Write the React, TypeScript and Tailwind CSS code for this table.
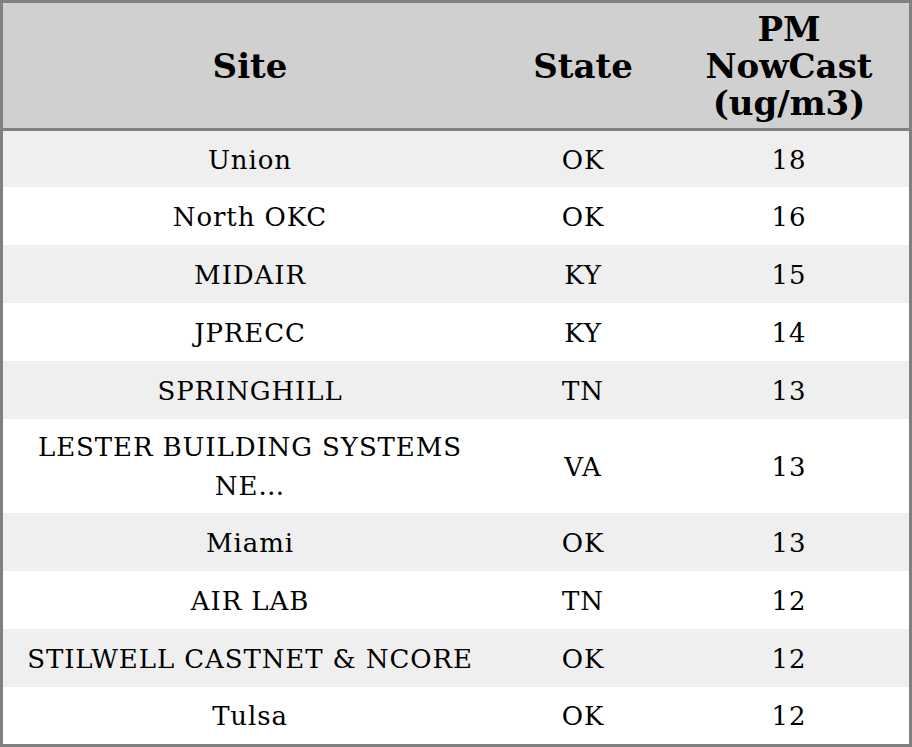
const rows: [string, string, string][] = [
  ["Union", "OK", "18"],
  ["North OKC", "OK", "16"],
  ["MIDAIR", "KY", "15"],
  ["JPRECC", "KY", "14"],
  ["SPRINGHILL", "TN", "13"],
  ["LESTER BUILDING SYSTEMS NE…", "VA", "13"],
  ["Miami", "OK", "13"],
  ["AIR LAB", "TN", "12"],
  ["STILWELL CASTNET & NCORE", "OK", "12"],
  ["Tulsa", "OK", "12"],
];

export default function App() {
  return (
    <div className="w-[912px] h-[747px] bg-white font-['DejaVu_Serif',serif] text-black">
      <div className="border-[3px] border-[#808080] flex flex-col">
        {/* header */}
        <div className="flex h-[128px] pt-px bg-[#d0d0d0] border-b-[3px] border-[#808080] font-bold text-[34px] leading-[37px]">
          <div className="w-[494px] flex items-center justify-center text-center">Site</div>
          <div className="w-[172px] flex items-center justify-center text-center">State</div>
          <div className="w-[240px] flex items-center justify-center text-center px-2">
            PM NowCast (ug/m3)
          </div>
        </div>
        {rows.map((r, i) => (
          <div
            key={i}
            className={`flex pt-[2px] text-[26px] leading-[39px] tracking-[0.9px] ${i % 2 === 0 ? "bg-[#efefef]" : "bg-white"} ${
              i === 0 ? "h-[56px]" : i === 5 ? "h-[94px]" : i === 9 ? "h-[57px]" : "h-[58px]"
            }`}
          >
            <div className="w-[494px] flex items-center justify-center text-center px-6">{r[0]}</div>
            <div className="w-[172px] flex items-center justify-center">{r[1]}</div>
            <div className="w-[240px] flex items-center justify-center">{r[2]}</div>
          </div>
        ))}
      </div>
    </div>
  );
}
